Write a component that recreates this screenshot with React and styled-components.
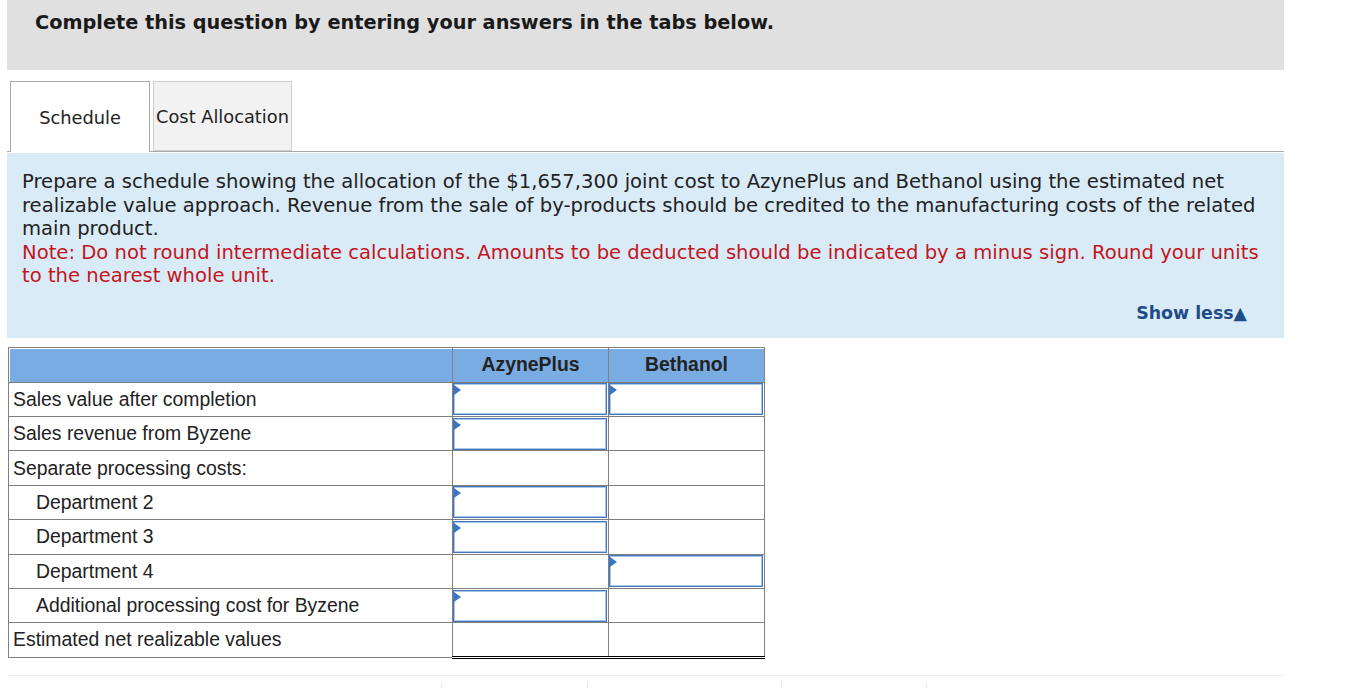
import React from "react";
import styled, { createGlobalStyle } from "styled-components";

const GlobalStyle = createGlobalStyle`
  html, body { margin: 0; padding: 0; background: #ffffff; }
  body { font-family: "DejaVu Sans", Verdana, sans-serif; color: #222; }
`;

const Page = styled.div`
  width: 1277px;
  padding-left: 7px;
`;

const TopBar = styled.div`
  height: 70px;
  box-sizing: border-box;
  background: #e0e0e0;
  padding: 11px 28px;
  font-family: "DejaVu Sans", Verdana, sans-serif;
  font-weight: bold;
  font-size: 19.3px;
  line-height: 24px;
  color: #1a1a1a;
`;

const TabRow = styled.div`
  display: flex;
  align-items: flex-end;
  gap: 3px;
  margin-top: 11px;
  padding-left: 3px;
  height: 71px;
  box-sizing: border-box;
  border-bottom: 1px solid #a9a9a9;
`;

const Tab = styled.div`
  box-sizing: border-box;
  display: flex;
  align-items: center;
  justify-content: center;
  width: ${(p) => (p.$active ? "140px" : "139px")};
  height: ${(p) => (p.$active ? "71px" : "70px")};
  margin-bottom: ${(p) => (p.$active ? "-1px" : "0")};
  background: ${(p) => (p.$active ? "#ffffff" : "#f2f2f2")};
  border: 1px solid ${(p) => (p.$active ? "#a9a9a9" : "#cccccc")};
  border-bottom: ${(p) => (p.$active ? "none" : "1px solid #cccccc")};
  font-size: 17.8px;
  color: #222;
  white-space: nowrap;
  overflow: hidden;
`;

const Panel = styled.div`
  margin-top: 1px;
  background: #daebf8;
  padding: 17px 15px 12px 15px;
  font-size: 19.6px;
  line-height: 23.6px;
  color: #222;
`;

const Note = styled.div`
  color: #c3161c;
`;

const ShowLess = styled.div`
  margin-top: 14px;
  text-align: right;
  padding-right: 22px;
  font-weight: bold;
  font-size: 17.4px;
  color: #1f4c87;
`;

const Table = styled.table`
  margin-top: 9px;
  margin-left: 1px;
  border-collapse: collapse;
  font-family: "Liberation Sans", Arial, sans-serif;
  font-size: 19.4px;
  color: #222;
  border: 1px solid #808080;
`;

const HeadCell = styled.th`
  background: #7aace4;
  height: 34px;
  padding: 0;
  border: 1px solid #808080;
  font-weight: bold;
  text-align: center;
  width: ${(p) => p.$w}px;
  box-shadow: ${(p) => (p.$first ? "inset 1px 1px 0 #ffffff" : "inset 0 1px 0 #ffffff")};
`;

const Row = styled.tr`
  height: 34.4px;
`;

const LabelCell = styled.td`
  padding: 0 0 0 ${(p) => (p.$indent ? "27px" : "4px")};
  border: 1px solid #808080;
  white-space: nowrap;
`;

const ValueCell = styled.td`
  padding: 0;
  border: 1px solid #808080;
  border-top: ${(p) => (p.$total ? "1px solid #000" : "1px solid #808080")};
  border-bottom: ${(p) => (p.$total ? "3px double #000" : "1px solid #808080")};
  vertical-align: middle;
`;

const InputBox = styled.div`
  position: relative;
  box-sizing: border-box;
  width: calc(100% - 1px);
  height: 32px;
  border: 1px solid #4577bb;
  box-shadow: inset 0 0 0 1px #a8c5ea;
  background: #fff;
  &::before {
    content: "";
    position: absolute;
    top: 1px;
    left: 0;
    border-left: 7px solid #3a76c3;
    border-top: 5px solid transparent;
    border-bottom: 5px solid transparent;
  }
`;

const Footer = styled.div`
  margin-top: 16px;
  border-top: 1px solid #efefef;
  height: 12px;
  display: grid;
  grid-template-columns: 434px 146px 194px 145px 1fr;
`;

const Tick = styled.div`
  border-left: ${(p) => (p.$on ? "1px solid #e6e6e6" : "none")};
  margin-top: 6px;
`;

const rows = [
  { label: "Sales value after completion", a: true, b: true },
  { label: "Sales revenue from Byzene", a: true, b: false },
  { label: "Separate processing costs:", a: false, b: false },
  { label: "Department 2", indent: true, a: true, b: false },
  { label: "Department 3", indent: true, a: true, b: false },
  { label: "Department 4", indent: true, a: false, b: true },
  { label: "Additional processing cost for Byzene", indent: true, a: true, b: false },
  { label: "Estimated net realizable values", a: false, b: false, total: true },
];

export default function App() {
  return (
    <>
      <GlobalStyle />
      <Page>
        <TopBar>Complete this question by entering your answers in the tabs below.</TopBar>
        <TabRow>
          <Tab $active>Schedule</Tab>
          <Tab>Cost Allocation</Tab>
        </TabRow>
        <Panel>
          <div>
            Prepare a schedule showing the allocation of the $1,657,300 joint cost to AzynePlus and
            Bethanol using the estimated net realizable value approach. Revenue from the sale of
            by-products should be credited to the manufacturing costs of the related main product.
          </div>
          <Note>
            Note: Do not round intermediate calculations. Amounts to be deducted should be indicated
            by a minus sign. Round your units to the nearest whole unit.
          </Note>
          <ShowLess>Show less▲</ShowLess>
        </Panel>
        <Table>
          <thead>
            <tr>
              <HeadCell $w={443} $first></HeadCell>
              <HeadCell $w={155}>AzynePlus</HeadCell>
              <HeadCell $w={155}>Bethanol</HeadCell>
            </tr>
          </thead>
          <tbody>
            {rows.map((r) => (
              <Row key={r.label}>
                <LabelCell $indent={r.indent}>{r.label}</LabelCell>
                <ValueCell $total={r.total}>{r.a && <InputBox />}</ValueCell>
                <ValueCell $total={r.total}>{r.b && <InputBox />}</ValueCell>
              </Row>
            ))}
          </tbody>
        </Table>
        <Footer>
          <Tick />
          <Tick $on />
          <Tick $on />
          <Tick $on />
          <Tick $on />
        </Footer>
      </Page>
    </>
  );
}
